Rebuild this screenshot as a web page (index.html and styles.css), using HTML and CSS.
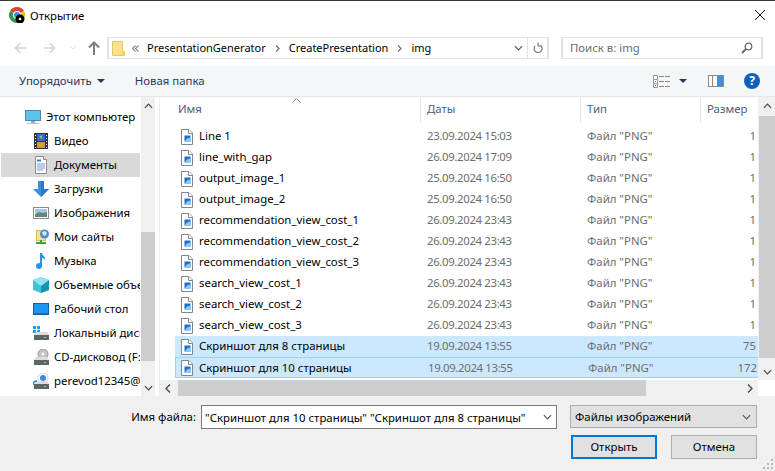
FILE: index.html
```html
<!DOCTYPE html>
<html lang="ru">
  <head>
    <meta charset="UTF-8" />
    <title>Открытие</title>
    <link rel="stylesheet" href="styles.css">
  </head>

  <body>
    <svg class="defs" width="0" height="0">
      <symbol id="file" viewBox="0 0 12 16">
        <path d="M.5.5h7.500l3.500 3.500v11.500H.5z" fill="#fff" stroke="#7f8790"/>
        <path d="M7.500.5v4h4" fill="#fff" stroke="#7f8790"/>
        <rect x="3.500" y="6.500" width="6" height="6" fill="#1c6fc9"/>
        <path d="M3.500 12.500l3.500-4 1 1 1.500-2v5z" fill="#8ccbf5"/>
      </symbol>
      <symbol id="chev" viewBox="0 0 10 6">
        <path d="M1 1l4 4 4-4" fill="none" stroke="currentColor" stroke-width="1.300"/>
      </symbol>
      <symbol id="drive" viewBox="0 0 15 8">
        <path d="M2 0h11l2 3v5H0V3z" fill="#dcdcdc"/>
        <rect y="3" width="15" height="5" fill="#5e6468"/>
        <rect x="10" y="5" width="2" height="1" fill="#5fe05f"/>
      </symbol>
    </svg>

    <div class="dialog">
      <div class="titlebar">
        <svg class="app-icon" width="16" height="16" viewBox="0 0 16 16">
          <path d="M8 8L1.070 4A8 8 0 0 1 14.930 4z" fill="#dc4437"/>
          <path d="M8 8L14.930 4A8 8 0 0 1 8 16z" fill="#f4c20d"/>
          <path d="M8 8L8 16A8 8 0 0 1 1.070 4z" fill="#2f9e4a"/>
          <circle cx="8" cy="8" r="4" fill="#fff"/>
          <circle cx="8" cy="8" r="3" fill="#4285f4"/>
          <circle cx="11" cy="12" r="4.500" fill="#000"/>
          <circle cx="11" cy="12" r="1.300" fill="#fff"/>
        </svg>
        <span class="title">Открытие</span>
        <svg class="close" width="10" height="10" viewBox="0 0 10 10">
          <path d="M0 0l10 10M10 0L0 10" stroke="#111" stroke-width="1"/>
        </svg>
      </div>

      <div class="navbar">
        <svg class="nav-btn" width="12" height="12" viewBox="0 0 12 12">
          <path d="M12 6H2M6 1.500L1.500 6 6 10.500" fill="none" stroke="#d3d3d3" stroke-width="1.700"/>
        </svg>
        <svg class="nav-btn gap-fwd" width="12" height="12" viewBox="0 0 12 12">
          <path d="M0 6h10M6 1.500L10.500 6 6 10.500" fill="none" stroke="#d3d3d3" stroke-width="1.700"/>
        </svg>
        <svg class="nav-drop" width="6" height="4"><use href="#chev" color="#d3d3d3"/></svg>
        <svg class="nav-up" width="12" height="14" viewBox="0 0 12 14">
          <path d="M6 14V2M1 6.500L6 1.500l5 5" fill="none" stroke="#7f7f7f" stroke-width="2"/>
        </svg>
        <div class="address">
          <svg class="folder" width="13" height="15" viewBox="0 0 13 15">
            <path d="M.5.5h10v14H.5z" fill="#fbe08e" stroke="#e3c56b"/>
            <rect x="10" y="10" width="3" height="5" fill="#f0cf72"/>
          </svg>
          <svg class="crumb-more" width="7" height="7" viewBox="0 0 7 7">
            <path d="M3.500.5l-3 3 3 3M6.500.5l-3 3 3 3" fill="none" stroke="#8a8a8a" stroke-width="1.100"/>
          </svg>
          <span class="crumb">PresentationGenerator</span>
          <svg class="crumb-sep" width="5" height="7" viewBox="0 0 5 7"><path d="M1 .5l3 3-3 3" fill="none" stroke="#6f6f6f" stroke-width="1.200"/></svg>
          <span class="crumb">CreatePresentation</span>
          <svg class="crumb-sep" width="5" height="7" viewBox="0 0 5 7"><path d="M1 .5l3 3-3 3" fill="none" stroke="#6f6f6f" stroke-width="1.200"/></svg>
          <span class="crumb">img</span>
          <svg class="addr-drop" width="9" height="6"><use href="#chev" color="#555"/></svg>
          <span class="addr-refresh">
            <svg width="10" height="12" viewBox="0 0 10 12">
              <path d="M7.500 3.300A4 4 0 1 1 2 4M5 .5v3.500h3.500" fill="none" stroke="#7c7c7c" stroke-width="1.200"/>
            </svg>
          </span>
        </div>
        <div class="search">
          <span class="search-text">Поиск в: img</span>
          <svg width="12" height="12" viewBox="0 0 12 12">
            <circle cx="7.500" cy="4.500" r="3.300" fill="none" stroke="#6c6c6c" stroke-width="1.300"/>
            <path d="M5 7l-4 4" stroke="#6c6c6c" stroke-width="2"/>
          </svg>
        </div>
      </div>

      <div class="toolbar">
        <span class="tool">Упорядочить</span>
        <span class="caret tool-caret"></span>
        <span class="tool new-folder">Новая папка</span>
        <svg class="view-icon" width="17" height="13" viewBox="0 0 17 13">
          <path d="M.5.500h4v12h-4zM.5 4.500h4M.5 8.500h4" fill="#fff" stroke="#9a9a9a"/>
          <path d="M6 1.500h5M12 1.500h5M6 6.500h5M12 6.500h5M6 11.500h5M12 11.500h5" stroke="#8a8a8a"/>
          <rect x="2" y="10" width="1" height="1" fill="#d04a3a"/>
          <rect x="2" y="6" width="1" height="1" fill="#3a7fd0"/>
        </svg>
        <span class="caret view-caret"></span>
        <svg class="pane-icon" width="16" height="12" viewBox="0 0 16 12">
          <rect x=".5" y=".5" width="15" height="11" fill="#fff" stroke="#8a8a8a"/>
          <rect x="9" y="1" width="6" height="10" fill="#3f8fdc"/>
          <path d="M4.500 1v10" stroke="#8a8a8a"/>
        </svg>
        <span class="help">?</span>
      </div>

      <div class="content">
        <div class="sidebar">
          <ul class="tree">
            <li class="tree-item root">
              <svg width="16" height="16" viewBox="0 0 16 16">
                <rect x=".5" y="1.500" width="15" height="10" fill="#5fc0f2" stroke="#4f86ad"/>
                <rect x="6" y="12" width="4" height="2" fill="#9aa9b5"/>
                <rect x="2" y="14" width="12" height="1" fill="#b6c2cc"/>
              </svg>
              Этот компьютер
            </li>
            <li class="tree-item">
              <svg width="16" height="16" viewBox="0 0 16 16">
                <rect x="1" width="14" height="16" fill="#2f3640"/>
                <rect x="4" y="1" width="8" height="7" fill="#2f6fd0"/>
                <rect x="4" y="9" width="8" height="6" fill="#d99a2b"/>
                <path d="M6 4l3-2v4zM5 13l2-3 3 3z" fill="#c8b23a"/>
                <path d="M2.500 2v1M2.500 5v1M2.500 8v1M2.500 11v1M2.500 14v1M13.500 2v1M13.500 5v1M13.500 8v1M13.500 11v1M13.500 14v1" stroke="#fff"/>
              </svg>
              Видео
            </li>
            <li class="tree-item active">
              <svg width="16" height="18" viewBox="0 0 16 18">
                <path d="M2.500.5h8l3 3v14h-11z" fill="#fff" stroke="#8b8b8b"/>
                <path d="M10.500.5v3h3" fill="#e8e8e8" stroke="#8b8b8b"/>
                <path d="M4 4.500h4" stroke="#2f7fd0" stroke-width="2"/>
                <path d="M4 8h8M4 10h8M4 12h8M4 14h6" stroke="#6f9cc8"/>
              </svg>
              Документы
            </li>
            <li class="tree-item">
              <svg width="16" height="16" viewBox="0 0 16 16">
                <path d="M5 0h6v8h5l-8 8-8-8h5z" fill="#3c8ee0"/>
                <path d="M8 0h3v8h5l-8 8z" fill="#2c78c8"/>
              </svg>
              Загрузки
            </li>
            <li class="tree-item">
              <svg width="16" height="12" viewBox="0 0 16 12">
                <rect x=".5" y=".5" width="15" height="11" fill="#fff" stroke="#8b8b8b"/>
                <rect x="2" y="2" width="12" height="4" fill="#a9c6e6"/>
                <path d="M2 7l4-2 4 1 4-1v5H2z" fill="#5f8a78"/>
              </svg>
              Изображения
            </li>
            <li class="tree-item">
              <svg width="16" height="16" viewBox="0 0 16 16">
                <rect x="3.500" y="1.500" width="9" height="10" fill="#fbe08e" stroke="#d9b95c"/>
                <circle cx="11.500" cy="5" r="4.500" fill="#4f8fc8"/>
                <path d="M9 3l3-1 2 2-2 3-2-1z" fill="#d8ecf8"/>
                <path d="M7 11h2v2h4v2H3v-2h4z" fill="#3aa63a"/>
              </svg>
              Мои сайты
            </li>
            <li class="tree-item">
              <svg width="16" height="16" viewBox="0 0 16 16">
                <path d="M7 0h2c0 3 4 3 3 7-1-2-2-2-3-2v8a3 3 0 1 1-2-2.800z" fill="#1f96ea"/>
              </svg>
              Музыка
            </li>
            <li class="tree-item">
              <svg width="16" height="16" viewBox="0 0 16 16">
                <path d="M8 0l8 3v10l-8 3-8-3V3z" fill="#3fc3d8"/>
                <path d="M8 9l8-6v10l-8 3z" fill="#1b94b0"/>
                <path d="M8 0l8 3-8 6-8-6z" fill="#8fe6ee"/>
              </svg>
              Объемные объекты
            </li>
            <li class="tree-item">
              <svg width="16" height="12" viewBox="0 0 16 12">
                <rect x=".5" y=".5" width="15" height="11" fill="#1e96f0" stroke="#0f62a8"/>
                <rect x="1" y="10" width="14" height="1" fill="#0f78c8"/>
              </svg>
              Рабочий стол
            </li>
            <li class="tree-item">
              <svg width="16" height="15" viewBox="0 0 16 15">
                <path d="M0 0h3v3H0zM4 0h3v3H4zM0 4h3v3H0zM4 4h3v3H4z" fill="#18a0f0"/>
                <use href="#drive" x="1" y="6" width="15" height="8"/>
              </svg>
              Локальный диск (C:)
            </li>
            <li class="tree-item">
              <svg width="16" height="16" viewBox="0 0 16 16">
                <circle cx="10" cy="5" r="5" fill="#c4c4c4" stroke="#9a9a9a"/>
                <circle cx="10" cy="5" r="1.500" fill="#fff"/>
                <use href="#drive" x="1" y="8" width="15" height="8"/>
              </svg>
              CD-дисковод (F:)
            </li>
            <li class="tree-item">
              <svg width="16" height="16" viewBox="0 0 16 16">
                <circle cx="10" cy="5" r="5" fill="#fff" stroke="#c4d4e6"/>
                <circle cx="10" cy="5" r="3" fill="#3f86e0"/>
                <use href="#drive" x="1" y="8" width="15" height="8"/>
                <path d="M0 12c0-3 2-4 4-4" fill="none" stroke="#1f7fd8" stroke-width="1.500"/>
              </svg>
              perevod12345@mail.ru
            </li>
          </ul>
          <div class="vscroll side-scroll">
            <svg class="arrow" width="9" height="6"><use href="#chev" color="#444"/></svg>
            <div class="thumb side-thumb"></div>
            <svg class="arrow arrow-bottom" width="9" height="6"><use href="#chev" color="#444"/></svg>
          </div>
        </div>

        <div class="files">
          <div class="files-main">
            <div class="columns">
              <span class="col col-name">Имя</span>
              <span class="col col-date">Даты</span>
              <span class="col col-type">Тип</span>
              <span class="col col-size">Размер</span>
              <svg class="sort" width="9" height="5" viewBox="0 0 9 5"><path d="M.5 4.500l4-4 4 4" fill="none" stroke="#8a8a8a"/></svg>
            </div>
            <div class="rows">
              <div class="row"><span class="r-name"><svg width="12" height="16"><use href="#file"/></svg>Line 1</span><span class="r-date">23.09.2024 15:03</span><span class="r-type">Файл "PNG"</span><span class="r-size">1</span></div>
              <div class="row"><span class="r-name"><svg width="12" height="16"><use href="#file"/></svg>line_with_gap</span><span class="r-date">26.09.2024 17:09</span><span class="r-type">Файл "PNG"</span><span class="r-size">1</span></div>
              <div class="row"><span class="r-name"><svg width="12" height="16"><use href="#file"/></svg>output_image_1</span><span class="r-date">25.09.2024 16:50</span><span class="r-type">Файл "PNG"</span><span class="r-size">1</span></div>
              <div class="row"><span class="r-name"><svg width="12" height="16"><use href="#file"/></svg>output_image_2</span><span class="r-date">25.09.2024 16:50</span><span class="r-type">Файл "PNG"</span><span class="r-size">1</span></div>
              <div class="row"><span class="r-name"><svg width="12" height="16"><use href="#file"/></svg>recommendation_view_cost_1</span><span class="r-date">26.09.2024 23:43</span><span class="r-type">Файл "PNG"</span><span class="r-size">1</span></div>
              <div class="row"><span class="r-name"><svg width="12" height="16"><use href="#file"/></svg>recommendation_view_cost_2</span><span class="r-date">26.09.2024 23:43</span><span class="r-type">Файл "PNG"</span><span class="r-size">1</span></div>
              <div class="row"><span class="r-name"><svg width="12" height="16"><use href="#file"/></svg>recommendation_view_cost_3</span><span class="r-date">26.09.2024 23:43</span><span class="r-type">Файл "PNG"</span><span class="r-size">1</span></div>
              <div class="row"><span class="r-name"><svg width="12" height="16"><use href="#file"/></svg>search_view_cost_1</span><span class="r-date">26.09.2024 23:43</span><span class="r-type">Файл "PNG"</span><span class="r-size">1</span></div>
              <div class="row"><span class="r-name"><svg width="12" height="16"><use href="#file"/></svg>search_view_cost_2</span><span class="r-date">26.09.2024 23:43</span><span class="r-type">Файл "PNG"</span><span class="r-size">1</span></div>
              <div class="row"><span class="r-name"><svg width="12" height="16"><use href="#file"/></svg>search_view_cost_3</span><span class="r-date">26.09.2024 23:43</span><span class="r-type">Файл "PNG"</span><span class="r-size">1</span></div>
              <div class="row selected"><span class="r-name"><svg width="12" height="16"><use href="#file"/></svg>Скриншот для 8 страницы</span><span class="r-date">19.09.2024 13:55</span><span class="r-type">Файл "PNG"</span><span class="r-size">75</span></div>
              <div class="row selected focused"><span class="r-name"><svg width="12" height="16"><use href="#file"/></svg>Скриншот для 10 страницы</span><span class="r-date">19.09.2024 13:55</span><span class="r-type">Файл "PNG"</span><span class="r-size">172</span></div>
            </div>
            <div class="hscroll">
              <svg class="h-arrow" width="6" height="9" viewBox="0 0 6 9"><path d="M5 .5l-4 4 4 4" fill="none" stroke="#444" stroke-width="1.300"/></svg>
              <div class="h-thumb"></div>
              <svg class="h-arrow h-arrow-right" width="6" height="9" viewBox="0 0 6 9"><path d="M1 .5l4 4-4 4" fill="none" stroke="#444" stroke-width="1.300"/></svg>
            </div>
          </div>
          <div class="list-scroll">
            <div class="vscroll">
              <svg class="arrow" width="9" height="6"><use href="#chev" color="#444"/></svg>
              <div class="thumb list-thumb"></div>
              <svg class="arrow arrow-bottom" width="9" height="6"><use href="#chev" color="#444"/></svg>
            </div>
          </div>
        </div>
      </div>

      <div class="footer">
        <div class="footer-row">
          <label class="file-label">Имя файла:</label>
          <div class="file-input">
            <span class="file-value">"Скриншот для 10 страницы" "Скриншот для 8 страницы"</span>
            <svg width="9" height="6"><use href="#chev" color="#555"/></svg>
          </div>
          <div class="file-type">
            <span class="file-value">Файлы изображений</span>
            <svg width="9" height="6"><use href="#chev" color="#555"/></svg>
          </div>
        </div>
        <div class="footer-buttons">
          <button class="btn primary">Открыть</button>
          <button class="btn">Отмена</button>
        </div>
        <svg class="grip" width="11" height="11" viewBox="0 0 11 11">
          <path d="M8 0h2v2H8zM4 4h2v2H4zM8 4h2v2H8zM0 8h2v2H0zM4 8h2v2H4zM8 8h2v2H8z" fill="#b8b8b8"/>
        </svg>
      </div>
    </div>
  </body>
</html>
```

FILE: styles.css
```css
* {
  box-sizing: border-box;
}

body {
  margin: 0;
  font-family: "Noto Sans", Arial, sans-serif;
  font-size: 11.4px;
  color: #000;
  overflow: hidden;
}

.defs {
  display: block;
  height: 0;
}

svg {
  display: block;
  flex: none;
}

.dialog {
  position: relative;
  display: flex;
  flex-direction: column;
  width: 775px;
  height: 471px;
  background: #fff;
  overflow: hidden;
  border-top: 1px solid #3a3a3a;
}

/* title */
.titlebar {
  display: flex;
  align-items: center;
  height: 32px;
  padding: 0 10px 4px 9px;
}

.title {
  margin-left: 5px;
}

.close {
  margin-left: auto;
}

/* address row */
.navbar {
  display: flex;
  align-items: center;
  height: 33px;
  padding: 4px 12px 7px 14px;
}

.gap-fwd {
  margin-left: 18px;
}

.nav-drop {
  margin-left: 14px;
}

.nav-up {
  margin-left: 12px;
}

.address {
  display: flex;
  align-items: center;
  width: 442px;
  height: 22px;
  margin-left: 7px;
  padding-left: 3px;
  border: 2px solid #e3e3e3;
  border-width: 1px 2px;
  white-space: nowrap;
}

.crumb {
  padding-bottom: 2px;
  font-size: 11px;
}

.crumb-more {
  margin-left: 7px;
  margin-right: 8px;
}

.crumb-sep {
  margin: 0 9px;
}

.addr-drop {
  margin-left: auto;
}

.addr-refresh {
  display: flex;
  align-items: center;
  justify-content: center;
  width: 20px;
  height: 20px;
  margin-left: 4px;
  border-left: 1px solid #e3e3e3;
}

.search {
  display: flex;
  align-items: center;
  justify-content: space-between;
  width: 202px;
  height: 22px;
  margin-left: 12px;
  padding: 0 8px 0 7px;
  border: 2px solid #e3e3e3;
  border-width: 1px 2px;
  color: #6d6d6d;
}

.search-text {
  padding-bottom: 2px;
}

/* toolbar */
.toolbar {
  display: flex;
  align-items: center;
  height: 31px;
  padding: 0 15px 0 19px;
  background: #f5f6f7;
  border-bottom: 1px solid #e6e6e6;
}

.tool {
  padding-bottom: 2px;
  color: #1e3a5f;
}

.caret {
  width: 0;
  height: 0;
  border-left: 4px solid transparent;
  border-right: 4px solid transparent;
  border-top: 4px solid #1e3a5f;
}

.tool-caret {
  margin-left: 5px;
}

.new-folder {
  margin-left: 30px;
}

.view-icon {
  margin-left: auto;
}

.view-caret {
  margin-left: 9px;
}

.pane-icon {
  margin-left: 21px;
}

.help {
  width: 16px;
  height: 16px;
  margin-left: 20px;
  border-radius: 50%;
  background: #0a63b8;
  color: #fff;
  font-size: 12px;
  font-weight: 700;
  line-height: 16px;
  text-align: center;
}

/* main area */
.content {
  display: flex;
  height: 299px;
}

.sidebar {
  display: flex;
  width: 160px;
  padding-right: 4px;
  border-right: 1px solid #f0f0f0;
}

.tree {
  flex: none;
  width: 139px;
  margin: 0 1px;
  padding: 8px 0 0 0;
  list-style: none;
  overflow: hidden;
}

.tree-item {
  display: flex;
  align-items: center;
  gap: 5px;
  height: 24px;
  padding-bottom: 2px;
  padding-left: 32px;
  white-space: nowrap;
}

.tree-item svg {
  margin-top: 2px;
}

.tree-item.root {
  padding-left: 24px;
}

.tree-item.active {
  background: #d9d9d9;
}

.vscroll {
  position: relative;
  display: flex;
  flex-direction: column;
  align-items: center;
  width: 15px;
  height: 100%;
  background: #f0f0f0;
}

.arrow {
  margin-top: 6px;
  transform: rotate(180deg);
}

.arrow-bottom {
  margin-top: auto;
  margin-bottom: 5px;
  transform: none;
}

.thumb {
  width: 100%;
  background: #cdcdcd;
}

.side-thumb {
  height: 129px;
  margin-top: 123px;
}

.files {
  display: flex;
  flex: 1;
  min-width: 0;
}

.files-main {
  display: flex;
  flex-direction: column;
  flex: none;
  width: 598px;
}

.columns {
  position: relative;
  display: grid;
  grid-template-columns: 260px 160px 120px 58px;
  height: 25px;
  flex: none;
  color: #4c607a;
}

.col {
  padding: 0 0 0 6px;
  line-height: 24px;
  border-left: 1px solid #e5e5e5;
}

.col-name {
  padding-left: 18px;
  border-left: 0;
}

.sort {
  position: absolute;
  left: 132px;
  top: 1px;
}

.rows {
  flex: none;
  height: 258px;
  padding: 4px 0 0 15px;
  overflow: hidden;
}

.row {
  display: grid;
  grid-template-columns: 245px 160px 120px 58px;
  align-items: center;
  height: 21px;
  white-space: nowrap;
}

.row.selected {
  background: #cce8ff;
}

.row.focused {
  border: 1px solid #99d1ff;
  border-right: 0;
}

.r-name {
  display: flex;
  align-items: center;
  gap: 6px;
  padding-bottom: 2px;
  padding-left: 6px;
}

.r-name svg {
  margin-top: 2px;
}

.row.focused .r-name {
  padding-left: 5px;
}

.r-date,
.r-type,
.r-size {
  padding-bottom: 2px;
  padding-left: 7px;
  color: #6d6d6d;
}

.r-date {
  letter-spacing: -0.35px;
}

.r-size {
  padding-right: 2px;
  text-align: right;
}

.hscroll {
  display: flex;
  align-items: center;
  height: 16px;
  flex: none;
  background: #f0f0f0;
}

.h-arrow {
  margin-left: 5px;
}

.h-thumb {
  width: 468px;
  height: 100%;
  margin-left: 7px;
  background: #cdcdcd;
}

.h-arrow-right {
  margin-left: auto;
  margin-right: 5px;
}

.list-scroll {
  flex: 1;
  height: 283px;
}

.list-thumb {
  height: 242px;
  margin-top: 7px;
}

.list-scroll .vscroll {
  width: 17px;
  padding-left: 1px;
}

/* bottom */
.footer {
  position: relative;
  flex: 1;
  padding: 9px 18px 0 0;
  background: #f0f0f0;
}

.footer-row {
  display: flex;
  align-items: flex-start;
}

.file-label {
  width: 196px;
  line-height: 24px;
  text-align: right;
}

.file-input {
  display: flex;
  align-items: center;
  justify-content: space-between;
  width: 356px;
  height: 24px;
  margin-left: 5px;
  padding: 0 4px 0 3px;
  background: #fff;
  border: 1px solid #7a7a7a;
  white-space: nowrap;
}

.file-type {
  display: flex;
  align-items: center;
  justify-content: space-between;
  width: 187px;
  height: 23px;
  margin-left: 13px;
  padding: 0 5px 0 4px;
  background: #e1e1e1;
  border: 1px solid #adadad;
}

.footer-buttons {
  display: flex;
  justify-content: flex-end;
  gap: 14px;
  margin-top: 6px;
}

.btn {
  width: 86px;
  height: 24px;
  padding: 0 0 2px;
  background: #e1e1e1;
  border: 1px solid #adadad;
  font-family: inherit;
  font-size: 11.4px;
  color: #000;
}

.btn.primary {
  border: 2px solid #0078d7;
}

.grip {
  position: absolute;
  right: 1px;
  bottom: 1px;
}
```
